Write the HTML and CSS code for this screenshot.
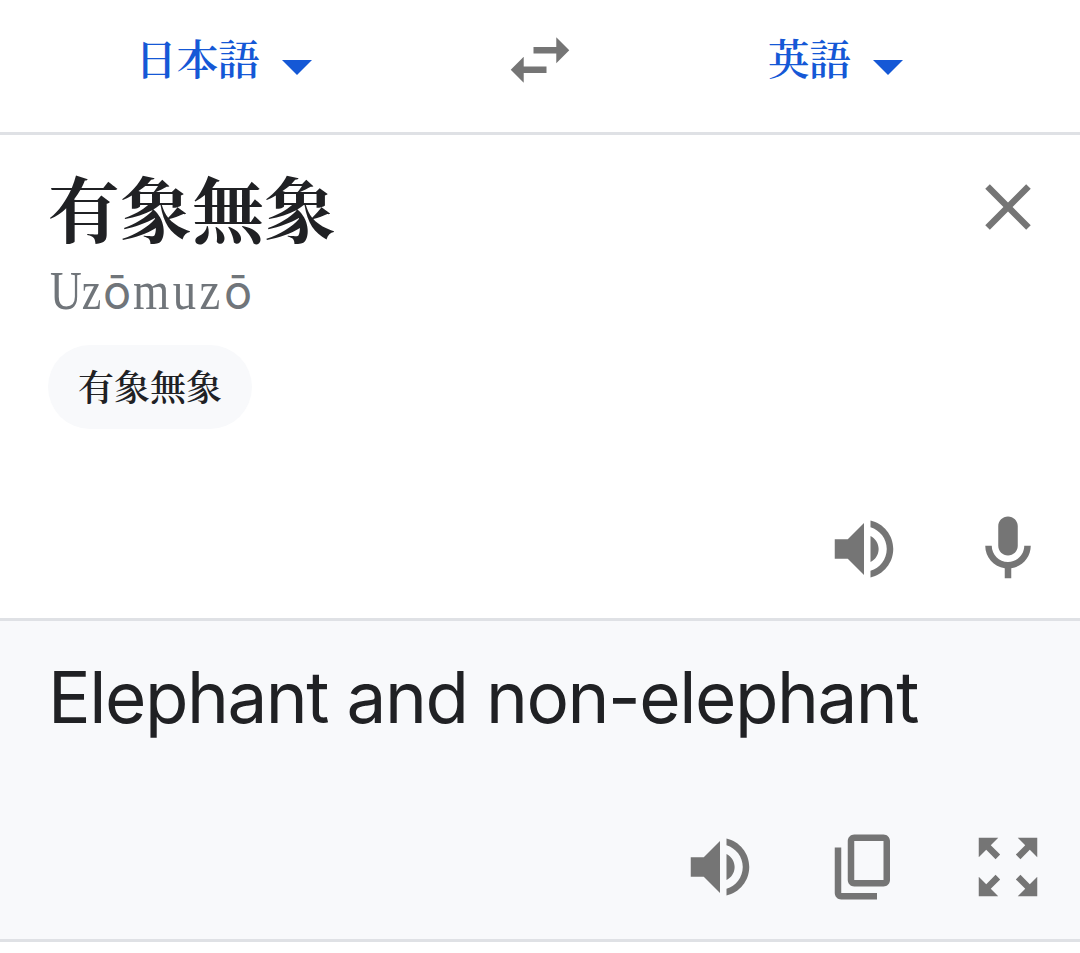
FILE: index.html
```html
<!DOCTYPE html>
<html lang="ja">
<head>
    <meta charset="UTF-8">
    <meta name="viewport" content="width=device-width, initial-scale=1.0">
    <title>翻訳</title>
    <link rel="stylesheet" href="styles.css">
</head>
<body>
    <header class="languages">
        <button class="language">日本語<span class="caret"></span></button>
        <button class="icon-button" aria-label="swap">
            <svg class="icon" viewBox="0 0 24 24"><path d="M6.99 11L3 15l3.99 4v-3H14v-2H6.99v-3zM21 9l-3.99-4v3H10v2h7.01v3L21 9z"/></svg>
        </button>
        <button class="language">英語<span class="caret"></span></button>
    </header>

    <main>
        <section class="source">
            <div class="source-row">
                <h1 class="source-text">有象無象</h1>
                <button class="icon-button" aria-label="clear">
                    <svg class="icon" viewBox="0 0 24 24"><path d="M19 6.41L17.59 5 12 10.59 6.41 5 5 6.41 10.59 12 5 17.59 6.41 19 12 13.41 17.59 19 19 17.59 13.41 12z"/></svg>
                </button>
            </div>
            <p class="romaji"><span class="romaji-start">Uz</span><span class="macron">ō</span><span class="romaji-mid">muz</span><span class="macron">ō</span></p>
            <button class="chip">有象無象</button>
            <div class="actions">
                <button class="icon-button" aria-label="listen">
                    <svg class="icon" viewBox="0 0 24 24"><path d="M3 9v6h4l5 5V4L7 9H3zm13.5 3c0-1.77-1.02-3.29-2.5-4.03v8.05c1.48-.73 2.5-2.25 2.5-4.02zM14 3.23v2.06c2.89.86 5 3.54 5 6.71s-2.11 5.85-5 6.71v2.06c4.01-.91 7-4.49 7-8.77s-2.99-7.86-7-8.77z"/></svg>
                </button>
                <button class="icon-button" aria-label="speak">
                    <svg class="icon" viewBox="0 0 24 24"><path d="M12 14c1.66 0 3-1.34 3-3V5c0-1.66-1.34-3-3-3S9 3.34 9 5v6c0 1.66 1.34 3 3 3zm5-3c0 2.76-2.24 5-5 5s-5-2.24-5-5H5c0 3.53 2.61 6.43 6 6.92V21h2v-3.08c3.39-.49 6-3.39 6-6.92h-2z"/></svg>
                </button>
            </div>
        </section>

        <section class="result">
            <p class="result-text" lang="en">Elephant and non-elephant</p>
            <div class="actions">
                <button class="icon-button" aria-label="listen">
                    <svg class="icon" viewBox="0 0 24 24"><path d="M3 9v6h4l5 5V4L7 9H3zm13.5 3c0-1.77-1.02-3.29-2.5-4.03v8.05c1.48-.73 2.5-2.25 2.5-4.02zM14 3.23v2.06c2.89.86 5 3.54 5 6.71s-2.11 5.85-5 6.71v2.06c4.01-.91 7-4.49 7-8.77s-2.99-7.86-7-8.77z"/></svg>
                </button>
                <button class="icon-button" aria-label="copy">
                    <svg class="icon" viewBox="0 0 24 24"><path d="M18 2H9c-1.1 0-2 .9-2 2v12c0 1.1.9 2 2 2h9c1.1 0 2-.9 2-2V4c0-1.1-.9-2-2-2zm0 14H9V4h9v12zM3 6v14c0 1.1.9 2 2 2h11v-2H5V6H3z"/></svg>
                </button>
                <button class="icon-button" aria-label="fullscreen">
                    <svg class="icon" viewBox="0 0 24 24"><path d="M15 3l2.3 2.3-2.89 2.87 1.42 1.42L18.7 6.7 21 9V3zM3 9l2.3-2.3 2.87 2.89 1.42-1.42L6.7 5.3 9 3H3zm6 12l-2.3-2.3 2.89-2.87-1.42-1.42L5.3 17.3 3 15v6zm12-6l-2.3 2.3-2.87-2.89-1.42 1.42 2.89 2.87L15 21h6z"/></svg>
                </button>
            </div>
        </section>
    </main>
</body>
</html>
```
FILE: styles.css
```css
* {
    box-sizing: border-box;
}
body {
    margin: 0;
    background-color: #fff;
    color: #202124;
    font-family: "Noto Serif CJK JP", "Noto Sans CJK JP", sans-serif;
}
h1, p {
    margin: 0;
}
button {
    padding: 0;
    border: 0;
    background: none;
    color: inherit;
    font-family: inherit;
}
.languages {
    display: grid;
    grid-template-columns: 1fr 78px 1fr;
    height: 135px;
    padding-top: 21px;
    border-bottom: 3px solid #dfe1e5;
}
.language {
    display: flex;
    align-items: center;
    justify-content: center;
    height: 72px;
    color: #1558d6;
    font-size: 41.5px;
    font-weight: 600;
}
.language:first-child {
    padding-right: 54px;
}
.language:last-child {
    padding-left: 12px;
}
.caret {
    margin: 20px 0 0 22px;
    border: 15px solid transparent;
    border-top-color: #1558d6;
    border-bottom-width: 0;
}
.icon-button {
    width: 78px;
    height: 78px;
}
.icon {
    display: block;
    width: 78px;
    height: 78px;
    fill: #757575;
}
.source {
    display: flex;
    flex-direction: column;
    height: 486px;
    padding: 33px 33px 30px 48px;
    border-bottom: 3px solid #dfe1e5;
}
.source-row {
    display: flex;
    justify-content: space-between;
    height: 84px;
}
.source-text {
    font-size: 72px;
    font-weight: 700;
    line-height: 76px;
}
.romaji {
    display: flex;
    align-items: baseline;
    height: 78px;
    padding: 9px 0 0 2px;
    color: #70757a;
    font-family: "Liberation Serif", serif;
    font-size: 55px;
    line-height: 60px;
}
.romaji-start, .romaji-mid {
    transform: scaleX(.8);
    transform-origin: left;
}
.romaji-start {
    width: 53px;
}
.romaji-mid {
    width: 91px;
    letter-spacing: 4px;
    transform: scaleX(.85);
}
.macron {
    width: 30px;
    font-family: Inter, sans-serif;
    font-size: 47px;
}
.chip {
    align-self: flex-start;
    width: 204px;
    height: 84px;
    margin-top: 15px;
    padding-bottom: 4px;
    border-radius: 42px;
    background-color: #f8f9fb;
    font-size: 36px;
    font-weight: 600;
}
.actions {
    display: flex;
    justify-content: flex-end;
    gap: 66px;
    margin-top: auto;
}
.result {
    display: flex;
    flex-direction: column;
    height: 321px;
    padding: 34px 33px 33px 48px;
    border-bottom: 3px solid #dfe1e5;
    background-color: #f8f9fb;
}
.result-text {
    font-family: Inter, sans-serif;
    font-size: 71px;
    font-weight: 400;
    letter-spacing: -1.46px;
    line-height: 84px;
    white-space: nowrap;
}
```
